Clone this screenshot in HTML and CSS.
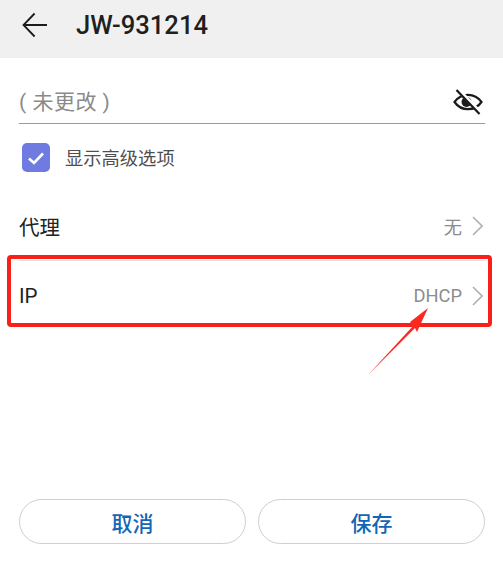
FILE: index.html
```html
<!DOCTYPE html>
<html lang="zh-CN">
<head>
    <meta charset="UTF-8">
    <meta name="viewport" content="width=device-width, initial-scale=1.0">
    <title>JW-931214</title>
    <link rel="stylesheet" href="styles.css">
</head>
<body>
    <div class="screen">
        <div class="header">
            <svg class="back-icon" width="26" height="26" viewBox="0 0 26 26">
                <path d="M25 13H1.500M12.600 1.500L1.500 13l11.100 11.500" fill="none" stroke="#1c1c1c" stroke-width="1.800"/>
            </svg>
            <h1>JW-931214</h1>
        </div>

        <div class="content">
            <div class="password">
                <span class="placeholder">( 未更改 )</span>
                <svg class="eye-icon" width="30" height="26" viewBox="0 0 30 26">
                    <path d="M1.500 13C5 8 9.500 5.800 15 5.800S25 8 28.500 13C25 18 20.500 20.200 15 20.200S5 18 1.500 13Z" fill="none" stroke="#1a1a1a" stroke-width="2.200"/>
                    <circle cx="13.500" cy="13" r="5" fill="#1a1a1a"/>
                    <path d="M5 0.500L27 23.500" stroke="#fff" stroke-width="4"/>
                    <path d="M3.500 1L26.500 25" stroke="#1a1a1a" stroke-width="2.200"/>
                </svg>
            </div>

            <div class="advanced">
                <span class="checkbox">
                    <svg width="18" height="14" viewBox="0 0 18 14">
                        <path d="M2 7.500L7 12 16 2.500" fill="none" stroke="#fff" stroke-width="2.600"/>
                    </svg>
                </span>
                <span class="advanced-label">显示高级选项</span>
            </div>

            <div class="row row-proxy">
                <span class="row-title">代理</span>
                <span class="row-value">无</span>
                <svg class="chevron" width="11" height="20" viewBox="0 0 11 20">
                    <path d="M1 1l9 9-9 9" fill="none" stroke="#b0b0b0" stroke-width="1.600"/>
                </svg>
            </div>
            <div class="row row-ip">
                <span class="row-title">IP</span>
                <span class="row-value">DHCP</span>
                <svg class="chevron" width="11" height="20" viewBox="0 0 11 20">
                    <path d="M1 1l9 9-9 9" fill="none" stroke="#b0b0b0" stroke-width="1.600"/>
                </svg>
            </div>
        </div>

        <div class="actions">
            <button>取消</button>
            <button>保存</button>
        </div>

        <!-- red markup drawn over the screenshot -->
        <div class="highlight"></div>
        <svg class="arrow" width="70" height="75" viewBox="0 0 70 75">
            <path d="M1 69L46 20 43 16 61 2 50 26 48 22Z" fill="#fb2a20"/>
        </svg>
    </div>
</body>
</html>
```

FILE: styles.css
```css
* {
    box-sizing: border-box;
}
body {
    margin: 0;
    background: #fff;
    font-family: Roboto, "Noto Sans CJK SC", sans-serif;
}
.screen {
    position: relative;
    width: 503px;
    height: 561px;
    display: flex;
    flex-direction: column;
    overflow: hidden;
}
.header {
    height: 58px;
    background: #f0f0f0;
    display: flex;
    align-items: center;
    padding: 0 0 8px 22px;
    flex-shrink: 0;
}
.back-icon {
    margin-right: 28px;
}
h1 {
    margin: 0;
    font-size: 25.600px;
    font-weight: 500;
    color: #1f1f1f;
}
.content {
    padding: 0 18px 0 19px;
    flex: 1;
}
.password {
    height: 66px;
    border-bottom: 1.500px solid #9a9a9a;
    display: flex;
    justify-content: space-between;
    align-items: flex-end;
    padding: 0 2px 9px 0;
}
.placeholder {
    font-size: 21px;
    letter-spacing: 0.500px;
    color: #8a8a8a;
    line-height: 28px;
    margin-bottom: -2px;
}
.eye-icon {
    margin-bottom: -1px;
}
.advanced {
    display: flex;
    align-items: center;
    height: 29px;
    margin-top: 19px;
    padding-left: 3px;
}
.checkbox {
    width: 28px;
    height: 29px;
    border-radius: 5px;
    background: #6f7be0;
    display: flex;
    align-items: center;
    justify-content: center;
    margin-right: 15px;
}
.advanced-label {
    font-size: 18.300px;
    color: #4f4f4f;
    margin-top: -2px;
}
.row {
    display: flex;
    align-items: center;
}
.row-proxy {
    height: 68px;
    margin-top: 20px;
}
.row-ip {
    height: 70px;
    border-top: 1px solid #e0e0e0;
}
.row-title {
    font-size: 20.500px;
    color: #222;
    flex: 1;
}
.row-value {
    font-size: 18.300px;
    color: #8c8c8c;
    margin-right: 10px;
}
.chevron {
    margin-right: 2px;
}
.actions {
    display: flex;
    gap: 12px;
    padding: 0 18px 17px 19px;
}
button {
    flex: 1;
    height: 45px;
    background: #fff;
    border: 1.500px solid #cfcfcf;
    border-radius: 23px;
    color: #1565b5;
    font-family: inherit;
    font-size: 21px;
    font-weight: 500;
}
.highlight {
    position: absolute;
    left: 7px;
    top: 255px;
    width: 485px;
    height: 72px;
    border: 4px solid #fb1f1a;
    border-radius: 4px;
}
.arrow {
    position: absolute;
    left: 367px;
    top: 306px;
}
```
